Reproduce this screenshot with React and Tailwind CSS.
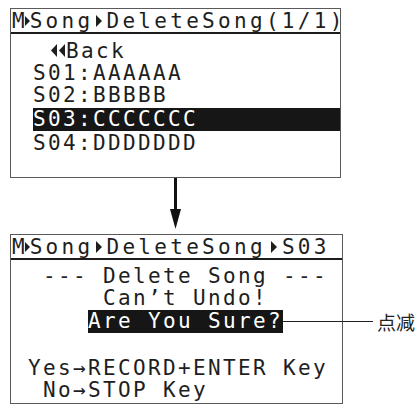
import React from "react";

const Tri = ({ dir = "right", w = 12, x = 3, s = 6, t = 5, b = 17 }) => (
  <svg width={w} height="22" viewBox={`0 0 ${w} 22`} className="inline-block align-top shrink-0">
    {dir === "right" ? (
      <polygon points={`${x},${t} ${x + s},${(t + b) / 2} ${x},${b}`} fill="currentColor" />
    ) : (
      <polygon points={`${x + s},${t} ${x},${(t + b) / 2} ${x + s},${b}`} fill="currentColor" />
    )}
  </svg>
);

const Row = ({ children, className = "" }) => (
  <div className={`h-[22px] leading-[22px] whitespace-pre tracking-[2.36px] ${className}`}>{children}</div>
);

const Header = ({ tail }) => (
  <div className="pt-[1px] pl-[1px] border-b-2 border-[#1c1c1c] h-[25px] leading-[22px] flex whitespace-pre tracking-[3.3px]">
    <span className="tracking-normal">M</span>
    <Tri w={5} x={-1} />
    <span>Song</span>
    <Tri w={13} x={3} />
    <span>DeleteSong</span>
    {tail}
  </div>
);

export default function App() {
  return (
    <div className="w-[420px] h-[404px] bg-white relative overflow-hidden text-[21px] text-[#1e1e1e] font-['DejaVu_Sans_Mono',monospace]">
      <div className="pl-[10px] pt-[8px]">
        <div className="w-[331px] h-[170px] border border-[#5a5a5a]">
          <Header tail={<span>(1/1)</span>} />
          <div className="mt-[6px]">
            <Row className="ml-[22px] flex">
              <span className="w-[15px]" />
              <Tri dir="left" w={10} x={3} s={6} t={4} b={17} />
              <Tri dir="left" w={7} x={1} s={6} t={4} b={17} />
              <span className="ml-[1px]">Back</span>
            </Row>
            <Row className="ml-[22px]">S01:AAAAAA</Row>
            <Row className="ml-[22px]">S02:BBBBB</Row>
            <Row className="ml-[22px] mt-[2px] h-[23px] leading-[23px] bg-[#161616] text-white">S03:CCCCCCC</Row>
            <Row className="ml-[22px] mt-[1px]">S04:DDDDDDD</Row>
          </div>
        </div>

        <div className="w-[331px] flex flex-col items-center">
          <div className="w-[3px] h-[31px] bg-[#111] -ml-[1px]" />
          <svg width="11" height="20" viewBox="0 0 11 20" className="-ml-[1px]">
            <polygon points="0,0 11,0 5.5,20" fill="#111" />
          </svg>
        </div>

        <div className="mt-[5px] w-[333px] h-[170px] border border-[#5a5a5a]">
          <Header
            tail={
              <>
                <Tri w={16} x={5} />
                <span>S03</span>
              </>
            }
          />
          <div className="mt-[5px] pl-[2px]">
            <Row>{"  --- Delete Song ---"}</Row>
            <Row>{"      Can’t Undo!"}</Row>
            <Row className="mt-[1px] h-[23px] leading-[23px]">
              {"     "}
              <span className="bg-[#161616] text-white inline-block h-[23px]">Are You Sure?</span>
            </Row>
            <Row>{" "}</Row>
            <Row className="mt-[2px]">{" Yes→RECORD+ENTER Key"}</Row>
            <Row>{"  No→STOP Key"}</Row>
          </div>
        </div>
      </div>

      <div className="absolute left-[283px] top-[310px] h-[23px] flex items-center">
        <div className="w-[90px] h-[1.5px] bg-[#222]" />
        <span className="ml-[4px] text-[19px] leading-none text-[#222] font-['Noto_Sans_CJK_SC',sans-serif]">点减</span>
      </div>
    </div>
  );
}
